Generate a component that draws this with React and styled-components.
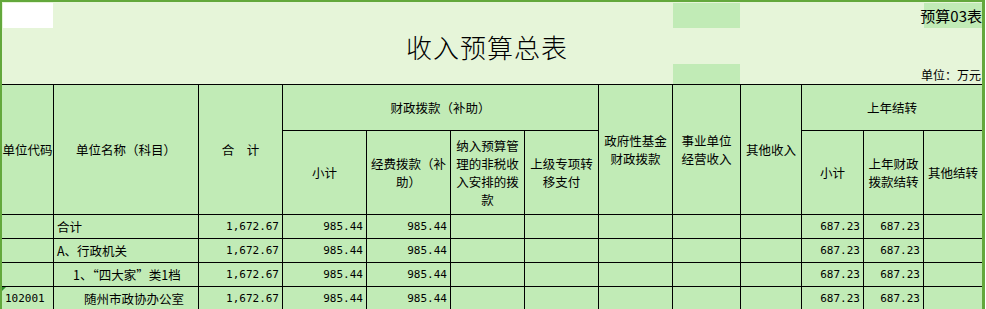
import React from "react";
import styled, { createGlobalStyle } from "styled-components";

const COLS = "51px 144px 83px 83px 83px 73px 73px 73px 67px 60px 61px 59px 58px";
const CJK = `"Noto Sans CJK SC", "Noto Sans", sans-serif`;
const MONO = `"DejaVu Sans Mono", "Liberation Mono", monospace`;

const GlobalStyle = createGlobalStyle`
  html, body {
    margin: 0;
    padding: 0;
    background: #ffffff;
    overflow: hidden;
  }
`;

const rows = [
  { code: "", name: "合计", indent: 0, values: ["1,672.67", "985.44", "985.44", "", "", "", "", "", "687.23", "687.23", ""] },
  { code: "", name: "A、行政机关", indent: 0, values: ["1,672.67", "985.44", "985.44", "", "", "", "", "", "687.23", "687.23", ""] },
  { code: "", name: "1、“四大家”类1档", indent: 16, values: ["1,672.67", "985.44", "985.44", "", "", "", "", "", "687.23", "687.23", ""] },
  { code: "102001", name: "随州市政协办公室", indent: 27, flagged: true, values: ["1,672.67", "985.44", "985.44", "", "", "", "", "", "687.23", "687.23", ""] },
];

const headCells = [
  { col: "1", row: "1 / 3", lines: ["单位代码"] },
  { col: "2", row: "1 / 3", lines: ["单位名称（科目）"] },
  { col: "3", row: "1 / 3", lines: ["合　计"] },
  { col: "4 / 8", row: "1", lines: ["财政拨款（补助）"] },
  { col: "4", row: "2", lines: ["小计"] },
  { col: "5", row: "2", lines: ["经费拨款（补", "助）"] },
  { col: "6", row: "2", lines: ["纳入预算管", "理的非税收", "入安排的拨", "款"] },
  { col: "7", row: "2", lines: ["上级专项转", "移支付"] },
  { col: "8", row: "1 / 3", lines: ["政府性基金", "财政拨款"] },
  { col: "9", row: "1 / 3", lines: ["事业单位", "经营收入"] },
  { col: "10", row: "1 / 3", lines: ["其他收入"] },
  { col: "11 / 14", row: "1", lines: ["上年结转"] },
  { col: "11", row: "2", lines: ["小计"] },
  { col: "12", row: "2", lines: ["上年财政", "拨款结转"] },
  { col: "13", row: "2", lines: ["其他结转"] },
];

function App() {
  return (
    <>
      <GlobalStyle />
      <Frame>
        <SheetHeader>
          <WhiteBlock />
          <FillBlock $col="9" $row="1" />
          <FormNo>预算03表</FormNo>
          <Title>收入预算总表</Title>
          <FillBlock $col="9" $row="3" />
          <Unit>单位：万元</Unit>
        </SheetHeader>
        <SheetTable>
          {headCells.map((c, i) => (
            <HeadCell key={i} $col={c.col} $row={c.row}>
              {c.lines.map((l, j) => (
                <span key={j}>{l}</span>
              ))}
            </HeadCell>
          ))}
          {rows.map((r, i) => (
            <React.Fragment key={i}>
              <CodeCell $flagged={r.flagged}>{r.code}</CodeCell>
              <NameCell $indent={r.indent}>{r.name}</NameCell>
              {r.values.map((v, j) => (
                <NumCell key={j}>{v}</NumCell>
              ))}
            </React.Fragment>
          ))}
        </SheetTable>
      </Frame>
    </>
  );
}

const Frame = styled.div`
  width: 980px;
  height: 320px;
  border-top: 2px solid #63a83c;
  border-left: 2px solid #63a83c;
  border-right: 3px solid #63a83c;
  background: #e6f5d9;
  color: #000;
  font-family: ${CJK};
`;

const SheetHeader = styled.div`
  display: grid;
  grid-template-columns: ${COLS};
  grid-template-rows: 25px 34px 20px;
  gap: 1px;
  padding-top: 1px;
  height: 82px;
  box-sizing: border-box;
`;

const WhiteBlock = styled.div`
  grid-column: 1;
  grid-row: 1;
  margin-left: 1px;
  background: #ffffff;
`;

const FillBlock = styled.div`
  grid-column: ${(p) => p.$col};
  grid-row: ${(p) => p.$row};
  background: #c1ebb6;
`;

const FormNo = styled.div`
  grid-column: 13;
  grid-row: 1;
  display: flex;
  align-items: center;
  justify-content: flex-end;
  white-space: nowrap;
  background: #c1ebb6;
  font-size: 15px;
`;

const Title = styled.div`
  grid-column: 1 / -1;
  grid-row: 2;
  display: flex;
  align-items: center;
  justify-content: center;
  padding-right: 10px;
  font-size: 26px;
  font-weight: 300;
  letter-spacing: 1px;
`;

const Unit = styled.div`
  grid-column: 11 / 14;
  grid-row: 3;
  display: flex;
  align-items: center;
  justify-content: flex-end;
  font-size: 12px;
  white-space: nowrap;
  padding-right: 1px;
`;

const SheetTable = styled.div`
  display: grid;
  grid-template-columns: ${COLS};
  grid-template-rows: 45px 83px repeat(4, 23px);
  gap: 1px;
  padding-top: 1px;
  background: #000000;
`;

const Cell = styled.div`
  background: #c1ebb6;
  display: flex;
  align-items: center;
  font-size: 12.5px;
  white-space: nowrap;
  overflow: hidden;
`;

const HeadCell = styled(Cell)`
  grid-column: ${(p) => p.$col};
  grid-row: ${(p) => p.$row};
  flex-direction: column;
  justify-content: center;
  line-height: 18px;
`;

const CodeCell = styled(Cell)`
  position: relative;
  padding-left: 3px;
  font-family: ${MONO};
  font-size: 11px;
  overflow: visible;

  &::before {
    content: "";
    display: ${(p) => (p.$flagged ? "block" : "none")};
    position: absolute;
    top: 0;
    left: 0;
    border-top: 4px solid #2f8f2f;
    border-right: 4px solid transparent;
  }
`;

const NameCell = styled(Cell)`
  padding-left: ${(p) => 3 + p.$indent}px;
`;

const NumCell = styled(Cell)`
  justify-content: flex-end;
  padding-right: 3px;
  font-family: ${MONO};
  font-size: 11px;
`;

export default App;
